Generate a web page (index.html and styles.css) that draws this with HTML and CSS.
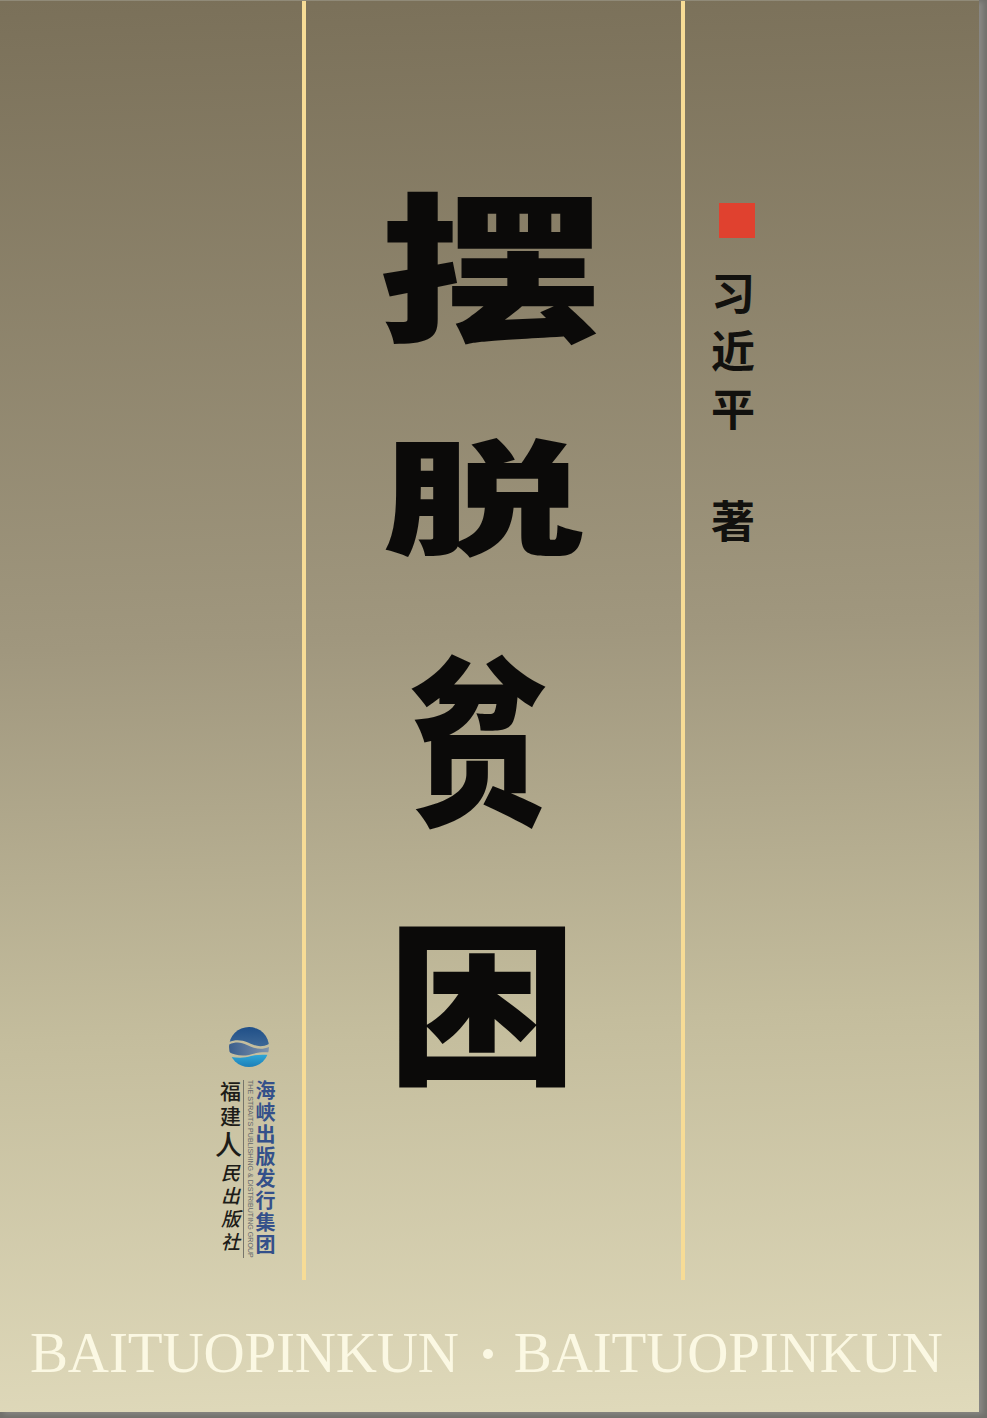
FILE: index.html
```html
<!DOCTYPE html>
<html lang="zh-CN">
<head>
<meta charset="utf-8">
<title>摆脱贫困</title>
<link rel="stylesheet" href="styles.css">
</head>
<body>
<main class="cover">
  <div class="panels">
    <aside class="side-left">
      <div class="publisher">
        <svg class="globe" viewBox="0 0 40 40" aria-hidden="true">
          <defs>
            <linearGradient id="g-top" x1="0" y1="0" x2="0" y2="1">
              <stop offset="0" stop-color="#1f4f88"/>
              <stop offset="1" stop-color="#3d6796"/>
            </linearGradient>
            <linearGradient id="g-mid" x1="0" y1="0" x2="1" y2="0">
              <stop offset="0" stop-color="#3b5e8c"/>
              <stop offset="1" stop-color="#7f93ad"/>
            </linearGradient>
            <linearGradient id="g-low" x1="0" y1="0" x2="0" y2="1">
              <stop offset="0" stop-color="#2fa6d6"/>
              <stop offset="1" stop-color="#1d7fb8"/>
            </linearGradient>
            <clipPath id="ball"><circle cx="20" cy="20" r="20"/></clipPath>
          </defs>
          <g clip-path="url(#ball)">
            <path fill="url(#g-top)" d="M0 0H40V17C32 21 26 19 19 15.500C12 12.500 6 12.500 0 15Z"/>
            <path fill="url(#g-mid)" d="M0 17.500C7 14.500 12 15 18 18C26 22 33 23 40 20V25.500C32 25 26 26 20 28C12 29.500 5 28 0 25Z"/>
            <path fill="url(#g-low)" d="M2 30C10 31 16 31 22 29C28 27.500 34 27.500 40 28V40H0Z"/>
          </g>
        </svg>
        <div class="imprints">
          <div class="imprint-local">
            <span class="il-plain">福</span>
            <span class="il-plain">建</span>
            <span class="il-big">人</span>
            <span class="il-small">民</span>
            <span class="il-small">出</span>
            <span class="il-small">版</span>
            <span class="il-small">社</span>
          </div>
          <div class="imprint-en">THE STRAITS PUBLISHING &amp; DISTRIBUTING GROUP</div>
          <div class="imprint-group">海峡出版发行集团</div>
        </div>
      </div>
    </aside>
    <section class="center">
      <h1 class="title">
        <span class="ch ch-1">摆</span>
        <span class="ch ch-2">脱</span>
        <span class="ch ch-3">贫</span>
        <span class="ch ch-4">困</span>
      </h1>
    </section>
    <aside class="side-right">
      <div class="seal"></div>
      <div class="author">习近平</div>
      <div class="role">著</div>
    </aside>
  </div>
  <footer class="pinyin">
    <span>BAITUOPINKUN</span>
    <span class="sep"></span>
    <span>BAITUOPINKUN</span>
  </footer>
</main>
</body>
</html>
```
FILE: styles.css
```css
* { box-sizing: border-box; }
html, body { margin: 0; padding: 0; }
body {
  width: 987px;
  height: 1418px;
  overflow: hidden;
  background: #71706c;
}
.cover {
  width: 979px;
  height: 1412px;
  display: flex;
  flex-direction: column;
  background: linear-gradient(178deg, #7a7059 0%, #a0977e 45%, #c4bd9d 72%, #e0dabb 100%);
  border-top: 1px solid #908a78;
  box-shadow: 4px 2px 5px #8a8985;
}
.panels {
  height: 1279px;
  display: grid;
  grid-template-columns: 302px 383px 1fr;
}
.side-left {
  display: flex;
  flex-direction: column;
  justify-content: flex-end;
  align-items: flex-end;
  padding: 0 22px 22px 0;
}
.publisher {
  width: 62px;
  display: flex;
  flex-direction: column;
  align-items: center;
}
.globe {
  width: 40px;
  height: 40px;
  margin-bottom: 13px;
  display: block;
}
.imprints {
  display: flex;
  height: 178px;
  align-self: stretch;
}
.imprint-local {
  width: 25px;
  display: flex;
  flex-direction: column;
  align-items: center;
  font-family: "Noto Sans CJK SC", sans-serif;
  color: #1d1c18;
  line-height: 1;
}
.il-plain { font-size: 21px; font-weight: 500; margin-bottom: 4px; }
.il-big { font-size: 27px; font-weight: 500; margin: 0 0 5px -4px; }
.il-small { font-size: 19px; font-weight: 500; margin-bottom: 4px; font-style: italic; }
.imprint-en {
  width: 12px;
  border-left: 1px solid #77756b;
  padding: 0 2px 0 2px;
  writing-mode: vertical-rl;
  font-family: "Liberation Sans", sans-serif;
  font-size: 7.100px;
  line-height: 7px;
  white-space: nowrap;
  color: #66686c;
}
.imprint-group {
  width: 21px;
  writing-mode: vertical-rl;
  font-family: "Noto Sans CJK SC", sans-serif;
  font-size: 20px;
  font-weight: 700;
  line-height: 21px;
  letter-spacing: 2px;
  white-space: nowrap;
  color: #34508a;
}
.center {
  border-left: 4px solid #f7dc96;
  border-right: 4px solid #f7dc96;
}
.title {
  margin: 0;
  padding-top: 178px;
  display: flex;
  flex-direction: column;
  align-items: center;
  font-family: "Noto Sans CJK SC", sans-serif;
  font-weight: 900;
  color: #0b0a09;
  line-height: 1;
}
.ch { display: block; }
.ch-1 { font-size: 160px; transform: translateX(-2.500px) scaleX(1.390); }
.ch-2 { font-size: 125px; margin-top: 88.500px; transform: translateX(-10.500px) scaleX(1.620); }
.ch-3 { font-size: 180px; margin-top: 89.500px; transform: translateX(-14.500px) scaleX(0.780); }
.ch-4 { font-size: 176px; margin-top: 84px; transform: translateX(-11px) scaleX(1.084); }
.side-right {
  display: flex;
  flex-direction: column;
  align-items: flex-start;
  padding: 202px 0 0 34px;
}
.seal {
  width: 36px;
  height: 35px;
  background: #e0412f;
}
.author {
  margin: 33px 0 0 -8px;
  width: 44px;
  writing-mode: vertical-rl;
  font-family: "Noto Sans CJK SC", sans-serif;
  font-size: 44px;
  font-weight: 700;
  line-height: 44px;
  letter-spacing: 14px;
  color: #12110e;
}
.role {
  margin: 52px 0 0 -8px;
  font-family: "Noto Sans CJK SC", sans-serif;
  font-size: 44px;
  font-weight: 700;
  line-height: 44px;
  color: #12110e;
}
.pinyin {
  display: flex;
  align-items: center;
  padding: 41px 0 0 30px;
  font-family: "Liberation Serif", serif;
  font-size: 57px;
  line-height: 64px;
  letter-spacing: -0.150px;
  color: #fbf8e3;
}
.sep {
  width: 10px;
  height: 10px;
  margin: 2px 21px 0 24px;
  border-radius: 50%;
  background: #fbf8e3;
}
```
